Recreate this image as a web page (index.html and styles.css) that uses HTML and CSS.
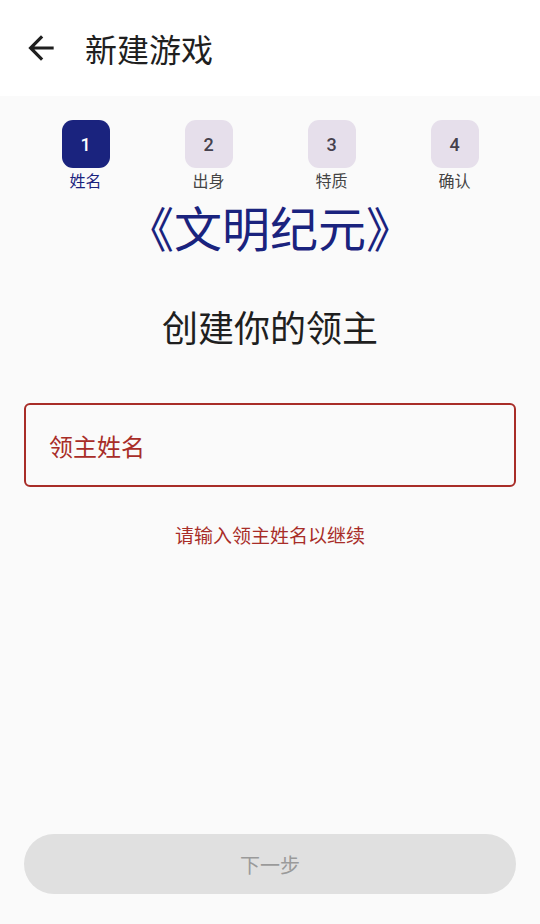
FILE: index.html
```html
<!DOCTYPE html>
<html lang="zh">
<head>
<meta charset="utf-8">
<link rel="stylesheet" href="styles.css">
</head>
<body>
<div class="app">
  <header class="topbar">
    <svg class="back" viewBox="0 0 24 24" width="38" height="38"><path d="M20 11H7.83l5.59-5.59L12 4l-8 8 8 8 1.41-1.41L7.83 13H20v-2z" fill="#1f1f1f"/></svg>
    <h1 class="title">新建游戏</h1>
  </header>
  <main class="content">
    <div class="steps">
      <div class="step active"><div class="num">1</div><div class="label">姓名</div></div>
      <div class="step"><div class="num">2</div><div class="label">出身</div></div>
      <div class="step"><div class="num">3</div><div class="label">特质</div></div>
      <div class="step"><div class="num">4</div><div class="label">确认</div></div>
    </div>
    <div class="game-title">《文明纪元》</div>
    <div class="subtitle">创建你的领主</div>
    <div class="field"><span class="placeholder">领主姓名</span></div>
    <div class="hint">请输入领主姓名以继续</div>
    <div class="spacer"></div>
    <button class="next">下一步</button>
  </main>
</div>
</body>
</html>
```
FILE: styles.css
```css
* { box-sizing: border-box; }
html, body { margin: 0; padding: 0; }
body {
  width: 540px; height: 924px;
  font-family: "Noto Sans CJK SC", "Noto Sans", Roboto, sans-serif;
  background: #fafafa;
}
.app { display: flex; flex-direction: column; height: 924px; }
.topbar {
  height: 96px; background: #ffffff;
  display: flex; align-items: center;
  padding-left: 22px;
}
.back { display: block; }
.title {
  margin: 0 0 0 25px;
  font-size: 32px; font-weight: 400; color: #1f1f1f;
  line-height: 1;
}
.content {
  flex: 1; display: flex; flex-direction: column;
  padding: 24px 24px 30px;
}
.steps { display: grid; grid-template-columns: repeat(4, 1fr); }
.step { display: flex; flex-direction: column; align-items: center; }
.num {
  width: 48px; height: 48px; border-radius: 11px;
  background: #e6dfeb; color: #45414d;
  display: flex; align-items: center; justify-content: center;
  font-family: Roboto, sans-serif; font-size: 18px; font-weight: 500;
}
.label { font-size: 16px; color: #444; line-height: 24px; margin-top: 0; }
.step.active .num { background: #1a237e; color: #fff; }
.step.active .label { color: #1a237e; }
.game-title {
  text-align: center; font-size: 48px; color: #1a237e;
  line-height: 1; margin-top: 10px; height: 48px;
}
.subtitle {
  text-align: center; font-size: 36px; color: #1f1f1f;
  line-height: 1; margin-top: 58px;
}
.field {
  margin-top: 59px; height: 84px;
  border: 2px solid #a82d28; border-radius: 6px;
  display: flex; align-items: center; padding-left: 23px;
}
.placeholder { font-size: 24px; color: #a82d28; }
.hint {
  text-align: center; font-size: 19px; color: #a82d28;
  margin-top: 36px; line-height: 24px;
}
.spacer { flex: 1; }
.next {
  height: 60px; border: none; border-radius: 30px;
  background: #e0e0e0; color: #9a9a9a;
  font-family: "Noto Sans CJK SC", sans-serif; font-size: 20px;
  width: 100%;
}
```
